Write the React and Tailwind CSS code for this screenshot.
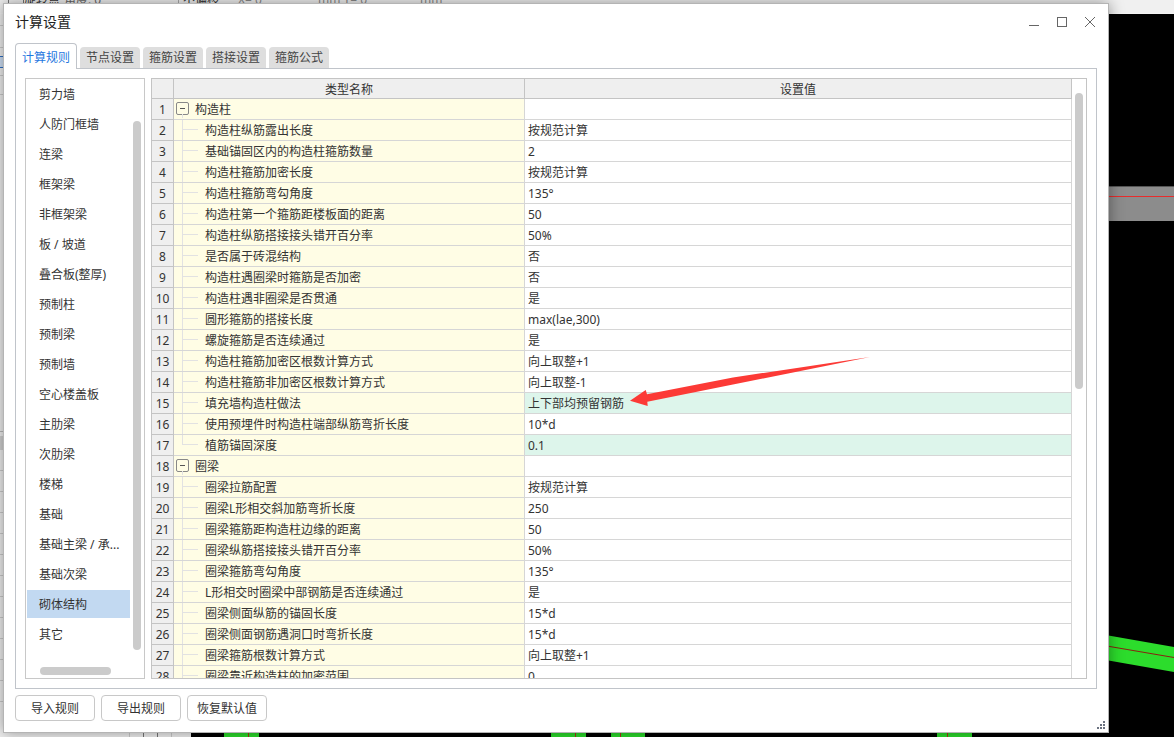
import clsx from "clsx";

const tabs = ["计算规则", "节点设置", "箍筋设置", "搭接设置", "箍筋公式"];

const categories = [
  "剪力墙",
  "人防门框墙",
  "连梁",
  "框架梁",
  "非框架梁",
  "板 / 坡道",
  "叠合板(整厚)",
  "预制柱",
  "预制梁",
  "预制墙",
  "空心楼盖板",
  "主肋梁",
  "次肋梁",
  "楼梯",
  "基础",
  "基础主梁 / 承...",
  "基础次梁",
  "砌体结构",
  "其它",
];

const rows = [
  { name: "构造柱", group: true },
  { name: "构造柱纵筋露出长度", value: "按规范计算" },
  { name: "基础锚固区内的构造柱箍筋数量", value: "2" },
  { name: "构造柱箍筋加密长度", value: "按规范计算" },
  { name: "构造柱箍筋弯勾角度", value: "135°" },
  { name: "构造柱第一个箍筋距楼板面的距离", value: "50" },
  { name: "构造柱纵筋搭接接头错开百分率", value: "50%" },
  { name: "是否属于砖混结构", value: "否" },
  { name: "构造柱遇圈梁时箍筋是否加密", value: "否" },
  { name: "构造柱遇非圈梁是否贯通", value: "是" },
  { name: "圆形箍筋的搭接长度", value: "max(lae,300)" },
  { name: "螺旋箍筋是否连续通过", value: "是" },
  { name: "构造柱箍筋加密区根数计算方式", value: "向上取整+1" },
  { name: "构造柱箍筋非加密区根数计算方式", value: "向上取整-1" },
  { name: "填充墙构造柱做法", value: "上下部均预留钢筋", changed: true },
  { name: "使用预埋件时构造柱端部纵筋弯折长度", value: "10*d" },
  { name: "植筋锚固深度", value: "0.1", changed: true, last: true },
  { name: "圈梁", group: true },
  { name: "圈梁拉筋配置", value: "按规范计算" },
  { name: "圈梁L形相交斜加筋弯折长度", value: "250" },
  { name: "圈梁箍筋距构造柱边缘的距离", value: "50" },
  { name: "圈梁纵筋搭接接头错开百分率", value: "50%" },
  { name: "圈梁箍筋弯勾角度", value: "135°" },
  { name: "L形相交时圈梁中部钢筋是否连续通过", value: "是" },
  { name: "圈梁侧面纵筋的锚固长度", value: "15*d" },
  { name: "圈梁侧面钢筋遇洞口时弯折长度", value: "15*d" },
  { name: "圈梁箍筋根数计算方式", value: "向上取整+1" },
  { name: "圈梁靠近构造柱的加密范围", value: "0" },
];

function Workspace() {
  return (
    <div className="flex h-full flex-col bg-[#f0f0f0]">
      <div className="flex h-3.5 shrink-0 items-start overflow-hidden border-b border-[#f4f4f4] pl-2 text-xs leading-3 text-[#333]">
        <div className="-mt-1.5 flex">
          <span className="w-4 border-x border-[#777]" />
          <span className="w-10">旋转点</span>
          <span className="w-[114px] text-[#666]">角度: 0</span>
          <span className="w-[60px] border-l border-[#aaa] pl-1">不偏移</span>
          <span className="w-20 text-[#888]">X= 0</span>
          <span className="w-[102px] text-[#888]">mm Y= 0</span>
          <span className="text-[#888]">mm</span>
        </div>
      </div>
      <div className="flex min-h-0 flex-1">
        <div className="flex w-[191px] shrink-0 flex-col">
          <div className="h-3 border-b border-[#ccc]" />
          <div className="h-[22px] border-b border-[#ccc]" />
          <div className="h-2" />
          <div className="h-3 border-y border-[#2d6fc4] bg-[#cfe0f5]" />
          <div className="h-2 border-b border-[#ccc]" />
          <div className="h-[19px] border-b border-[#ccc]" />
          <div className="h-[337px] border-b border-[#bbb]" />
          <div className="mt-1 h-3.5 bg-[#d2d2d2]" />
          <div className="min-h-0 flex-1 overflow-hidden">
            {[...Array(12)].map((_, i) => (
              <div key={i} className="h-[21px] border-b border-[#ccc]" />
            ))}
            <div className="flex h-10 pl-[129px]">
              <span className="w-3.5 border-l border-[#ccc]" />
              <span className="w-3.5 border-l border-[#777]" />
              <span className="w-3.5 border-l border-[#777]" />
              <span className="w-4 border-l border-[#ccc]" />
            </div>
          </div>
        </div>
        <div className="min-w-0 flex-1 overflow-hidden bg-black">
          <svg width="983" height="723" viewBox="191 14 983 723">
            <rect x="1000" y="186" width="174" height="35" fill="#8c8c8c" />
            <path d="M1000 186.500H1174" stroke="#555" />
            <path d="M1000 196.500H1174" stroke="#e82c2c" />
            <path d="M1060 627L1174 647V672L1060 652Z" fill="#2cdc2c" />
            <path d="M1060 638L1174 657.500" stroke="#8a2010" />
            <g fill="#2cdc2c">
              <rect x="224" y="700" width="35" height="37" />
              <rect x="551" y="700" width="35" height="37" />
              <rect x="611" y="700" width="34" height="37" />
              <rect x="937" y="700" width="35" height="37" />
            </g>
            <path
              d="M248.500 700V737M575.500 700V737M620.500 700V737M947.500 700V737"
              stroke="#b03018"
            />
          </svg>
        </div>
      </div>
    </div>
  );
}

function TitleBar() {
  return (
    <header className="flex h-[39px] shrink-0 items-center justify-between pr-1 pb-[3px] pl-[11px]">
      <h1 className="text-sm text-[#222]">计算设置</h1>
      <div className="flex text-[#666]">
        <button aria-label="最小化" className="flex w-7 justify-center">
          <svg width="10" height="10" viewBox="0 0 10 10" stroke="currentColor">
            <path d="M0 8.500H10" />
          </svg>
        </button>
        <button aria-label="最大化" className="flex w-7 justify-center">
          <svg width="10" height="10" viewBox="0 0 10 10" fill="none" stroke="currentColor">
            <rect x="0.500" y="0.500" width="9" height="9" />
          </svg>
        </button>
        <button aria-label="关闭" className="flex w-7 justify-center">
          <svg width="10" height="10" viewBox="0 0 10 10" stroke="currentColor">
            <path d="M0 0L10 10M10 0L0 10" />
          </svg>
        </button>
      </div>
    </header>
  );
}

function TabBar() {
  return (
    <nav className="flex h-[26px] shrink-0 items-end gap-[3px]">
      {tabs.map((tab, i) => (
        <button
          key={tab}
          className={clsx(
            "rounded-t px-1.5 leading-5",
            i === 0
              ? "relative h-[26px] border border-b-0 border-[#c0c4ca] bg-white pt-0.5 text-[#1f78e0]"
              : "mb-px h-[21px] bg-[#dedede] text-[#444]"
          )}
        >
          {tab}
        </button>
      ))}
    </nav>
  );
}

function CategoryList() {
  return (
    <aside className="flex w-[120px] shrink-0 flex-col border border-[#c8c8c8]">
      <div className="flex min-h-0 flex-1">
        <ul className="flex w-[107px] flex-col gap-0.5 p-px pr-[3px]">
          {categories.map((item) => (
            <li
              key={item}
              className={clsx(
                "h-7 shrink-0 truncate pt-0.5 pl-3 leading-[26px]",
                item === "砌体结构" && "bg-[#c2d9f1]"
              )}
            >
              {item}
            </li>
          ))}
        </ul>
        <div className="mt-[42px] w-2 rounded-full bg-[#cbcbcb]" />
      </div>
      <div className="h-7 shrink-0 pt-[17px] pl-3.5">
        <div className="h-2 w-[71px] rounded-full bg-[#cbcbcb]" />
      </div>
    </aside>
  );
}

function TreeName({ row }) {
  if (row.group) {
    return (
      <div className="flex h-5 items-center gap-1.5 pl-0.5">
        <button
          aria-label="折叠"
          className="relative mb-px flex size-[13px] items-center justify-center rounded-xs border border-[#888] after:absolute after:top-full after:left-[5px] after:h-1 after:w-px after:bg-[#e2e2e2]"
        >
          <span className="h-px w-[5px] bg-[#555]" />
        </button>
        <span className="pt-0.5 leading-[18px]">{row.name}</span>
      </div>
    );
  }

  return (
    <div className="flex h-5 items-center gap-[7px] pl-2">
      <span className="flex w-4 flex-col">
        <span className="h-2.5 border-b border-l border-[#e2e2e2]" />
        <span className={clsx("h-2.5", !row.last && "border-l border-[#e2e2e2]")} />
      </span>
      <span className="pt-0.5 leading-[18px]">{row.name}</span>
    </div>
  );
}

function RuleTable() {
  return (
    <div className="flex min-w-0 flex-1 overflow-hidden border border-[#c4c4c4]">
      <div className="min-w-0 flex-1 overflow-hidden">
        <table className="w-full table-fixed border-separate border-spacing-0">
          <colgroup>
            <col className="w-[22px]" />
            <col className="w-[351px]" />
            <col />
          </colgroup>
          <thead>
            <tr className="h-5 bg-[#efefef] leading-[17px]">
              <th className="border-r border-b border-[#c4c4c4] p-0" />
              <th className="border-r border-b border-[#c4c4c4] p-0 pt-0.5 font-normal">
                类型名称
              </th>
              <th className="border-r border-b border-[#c4c4c4] p-0 pt-0.5 font-normal">
                设置值
              </th>
            </tr>
          </thead>
          <tbody>
            {rows.map((row, i) => (
              <tr key={i} className="h-[21px] leading-[18px]">
                <td className="border-r border-b border-[#c4c4c4] bg-[#efefef] p-0 pt-0.5 text-center">
                  {i + 1}
                </td>
                <td className="border-r border-b border-[#d6d6d6] bg-[#fffde5] p-0">
                  <TreeName row={row} />
                </td>
                <td
                  className={clsx(
                    "border-r border-b border-[#d6d6d6] p-0 pt-0.5 pl-[3px]",
                    row.changed && "bg-[#ddf5eb]"
                  )}
                >
                  {row.value}
                </td>
              </tr>
            ))}
          </tbody>
        </table>
      </div>
      <div className="w-3.5 shrink-0 pt-3.5 pl-[3px]">
        <div className="h-[296px] w-2 rounded-full bg-[#cbcbcb]" />
      </div>
    </div>
  );
}

function FooterButton({ children }) {
  return (
    <button className="h-[26px] w-20 rounded border border-[#c8c8c8] bg-white pt-0.5 leading-[22px]">
      {children}
    </button>
  );
}

export default function App() {
  return (
    <div className="relative h-screen overflow-hidden font-['Noto_Sans','Noto_Sans_CJK_SC',sans-serif] text-xs text-[#333]">
      <Workspace />

      <main className="absolute top-[3px] right-[65px] bottom-1 left-[3px] flex flex-col border border-[#b4b4b4] bg-white shadow-[0_0_14px_rgba(0,0,0,0.4)]">
        <TitleBar />
        <div className="flex min-h-0 flex-1 flex-col px-[11px] pb-[11px]">
          <TabBar />
          <section className="-mt-px flex min-h-0 flex-1 gap-1.5 border border-[#c0c4ca] p-[9px]">
            <CategoryList />
            <RuleTable />
          </section>
          <footer className="flex shrink-0 gap-1.5 pt-1.5">
            <FooterButton>导入规则</FooterButton>
            <FooterButton>导出规则</FooterButton>
            <FooterButton>恢复默认值</FooterButton>
          </footer>
        </div>

        {/* arrow pointing at the changed value */}
        <svg
          className="pointer-events-none absolute top-[353px] left-[626px]"
          width="242"
          height="54"
          viewBox="630 357 242 54"
        >
          <path
            d="M630 400.700L645.700 390L647 394.300L733 377.500L870 357L733 384.500L647.300 401.700L647.700 406Z"
            fill="#fc3a36"
          />
        </svg>

        <svg
          className="absolute right-[3px] bottom-[3px]"
          width="8"
          height="8"
          viewBox="0 0 8 8"
          fill="#6b7280"
        >
          <path d="M6 0h2v2h-2zM3 3h2v2h-2zM6 3h2v2h-2zM0 6h2v2h-2zM3 6h2v2h-2zM6 6h2v2h-2z" />
        </svg>
      </main>
    </div>
  );
}
